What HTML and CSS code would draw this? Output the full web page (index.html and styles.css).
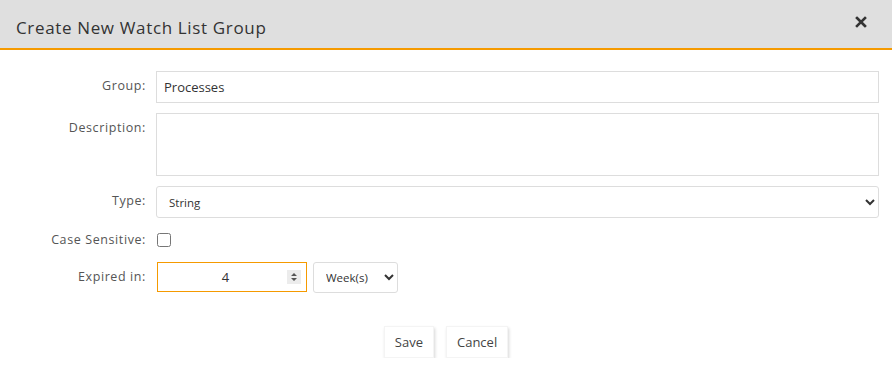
FILE: index.html
```html
<!DOCTYPE html>
<html lang="en">
<head>
    <meta charset="UTF-8">
    <title>Create New Watch List Group</title>
    <link rel="stylesheet" href="styles.css">
</head>
<body>
    <div class="dialog">
        <div class="dialog-header">
            <h2>Create New Watch List Group</h2>
            <svg class="close" width="12" height="12" viewBox="0 0 12 12">
                <path d="M2 2 L10 10 M10 2 L2 10" stroke="#333" stroke-width="2.6" stroke-linecap="square"/>
            </svg>
        </div>

        <form class="dialog-body">
            <div class="row">
                <label for="group">Group:</label>
                <input type="text" id="group" class="field" value="Processes">
            </div>
            <div class="row">
                <label for="desc">Description:</label>
                <textarea id="desc" class="field"></textarea>
            </div>
            <div class="row">
                <label for="type">Type:</label>
                <select id="type" class="field select">
                    <option>String</option>
                </select>
            </div>
            <div class="row row-check">
                <label for="case">Case Sensitive:</label>
                <input type="checkbox" id="case" class="check">
            </div>
            <div class="row">
                <label for="expire">Expired in:</label>
                <div class="inline">
                    <div class="number-wrap">
                        <input type="text" id="expire" class="field number" value="4">
                        <svg class="spin" width="14" height="14" viewBox="0 0 14 14">
                            <rect width="14" height="14" fill="#ececec"/>
                            <path d="M4 6 L7 3 L10 6 Z M4 8 L7 11 L10 8 Z" fill="#555"/>
                        </svg>
                    </div>
                    <select class="field unit">
                        <option>Week(s)</option>
                    </select>
                </div>
            </div>

            <div class="buttons">
                <button type="button">Save</button>
                <button type="button">Cancel</button>
            </div>
        </form>
    </div>
</body>
</html>
```

FILE: styles.css
```css
body {
    margin: 0;
    background-color: #fff;
    font-family: "Open Sans", "Noto Sans", sans-serif;
    color: #444;
}
.dialog-header {
    display: flex;
    justify-content: space-between;
    align-items: center;
    height: 48px;
    padding: 0 25px 0 16px;
    background-color: #dfdfdf;
    border-bottom: 2px solid #f59a00;
}
.dialog-header h2 {
    margin: 7px 0 0;
    font-size: 17px;
    font-weight: normal;
    color: #333;
    letter-spacing: 0.65px;
}
.close {
    margin-top: -4px;
}
.dialog-body {
    padding: 21px 13px 0 0;
}
.row {
    display: flex;
    gap: 10px;
    margin-bottom: 10px;
}
.row label {
    width: 146px;
    flex: none;
    text-align: right;
    font-size: 12.5px;
    letter-spacing: 0.6px;
    line-height: 18px;
    padding-top: 6px;
    color: #555;
}
.field {
    box-sizing: border-box;
    flex: 1;
    height: 32px;
    border: 1px solid #ddd;
    font-family: inherit;
    font-size: 13px;
    color: #333;
    padding: 0 7px;
    margin: 0;
    background: #fff;
    outline: none;
}
textarea.field {
    height: 63px;
    resize: none;
}
.select {
    font-size: 11.5px;
    border-radius: 3px;
    padding-left: 8px;
}
.row-check {
    margin-top: 7px;
    margin-bottom: 13px;
}
.row-check label {
    padding-top: 3px;
}
.check {
    margin: 5px 0 0 1px;
    width: 14px;
    height: 14px;
}
.inline {
    display: flex;
    gap: 6px;
    padding-left: 1px;
}
.number-wrap {
    position: relative;
}
.number {
    width: 150px;
    height: 30px;
    border-color: #f59a00;
    text-align: center;
    padding-right: 20px;
}
.spin {
    position: absolute;
    right: 6px;
    top: 8px;
}
.unit {
    flex: none;
    width: 85px;
    height: 31px;
    font-size: 11.5px;
    border-radius: 3px;
    padding-left: 8px;
}
.buttons {
    display: flex;
    justify-content: center;
    gap: 12px;
    padding-top: 23px;
    margin-left: 13px;
}
button {
    height: 32px;
    padding: 0 10px;
    background-color: #fff;
    border: 1px solid #f4f4f4;
    box-shadow: 1px 2px 3px rgba(0,0,0,0.16);
    font-family: inherit;
    font-size: 13px;
    color: #444;
    cursor: pointer;
}
```
